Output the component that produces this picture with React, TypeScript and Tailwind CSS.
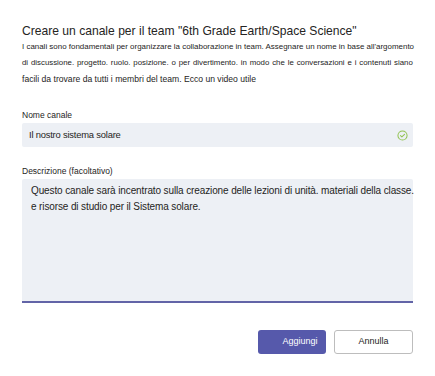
export default function App() {
  return (
    <div
      className="w-[435px] h-[376px] bg-white text-[#252423] px-[22px] flex flex-col"
      style={{ fontFamily: '"Liberation Sans", Arial, sans-serif' }}
    >
      <h1 className="mt-[23px] text-[12.1px] leading-[16px] font-normal text-[#252423]">
        Creare un canale per il team "6th Grade Earth/Space Science"
      </h1>

      <div className="mt-0 w-[391px] text-[#252423]">
        <p className="text-[7.95px] leading-[16px] whitespace-nowrap">
          I canali sono fondamentali per organizzare la collaborazione in team. Assegnare un nome in base all'argomento
        </p>
        <p className="text-[7.85px] leading-[16px] whitespace-nowrap flex justify-between">
          {"di discussione. progetto. ruolo. posizione. o per divertimento. in modo che le conversazioni e i contenuti siano"
            .split(" ")
            .map((w, i) => (
              <span key={i}>{w}</span>
            ))}
        </p>
        <p className="text-[8.6px] leading-[16px] whitespace-nowrap">
          facili da trovare da tutti i membri del team. Ecco un video utile
        </p>
      </div>

      <label className="mt-[22px] text-[8.5px] leading-[12px] text-[#252423]">Nome canale</label>
      <div className="mt-[2px] h-[24px] w-[391px] bg-[#edf0f5] rounded-[2px] flex items-center justify-between pl-[7px] pr-[5px]">
        <span className="text-[9.4px] tracking-[-0.2px]">Il nostro sistema solare</span>
        <svg width="11" height="11" viewBox="0 0 12 12" fill="none">
          <circle cx="6" cy="6" r="5" stroke="#92c353" strokeWidth="1.1" />
          <path d="M3.8 6.1 L5.3 7.5 L8.2 4.7" stroke="#92c353" strokeWidth="1.1" strokeLinecap="round" strokeLinejoin="round" />
        </svg>
      </div>

      <label className="mt-[18px] text-[8.5px] leading-[12px] text-[#252423]">Descrizione (facoltativo)</label>
      <div className="mt-[2px] h-[124px] w-[391px] bg-[#edf0f5] rounded-t-[2px] border-b-2 border-[#6264a7] pl-[9px] pr-[2px] pt-[4px]">
        <p className="text-[10px] leading-[16px] tracking-[-0.12px] whitespace-nowrap">
          Questo canale sarà incentrato sulla creazione delle lezioni di unità. materiali della classe.
          <br />
          e risorse di studio per il Sistema solare.
        </p>
      </div>

      <div className="mt-[27px] flex justify-end gap-[8px] w-[391px]">
        <button className="h-[24px] w-[68px] rounded-[3px] bg-[#5659ab] text-white text-[9px] pl-[16px] flex items-center justify-center">
          Aggiungi
        </button>
        <button className="h-[24px] w-[79px] rounded-[3px] bg-white border border-[#bdbdbd] text-[#252423] text-[9px] flex items-center justify-center">
          Annulla
        </button>
      </div>
    </div>
  );
}
